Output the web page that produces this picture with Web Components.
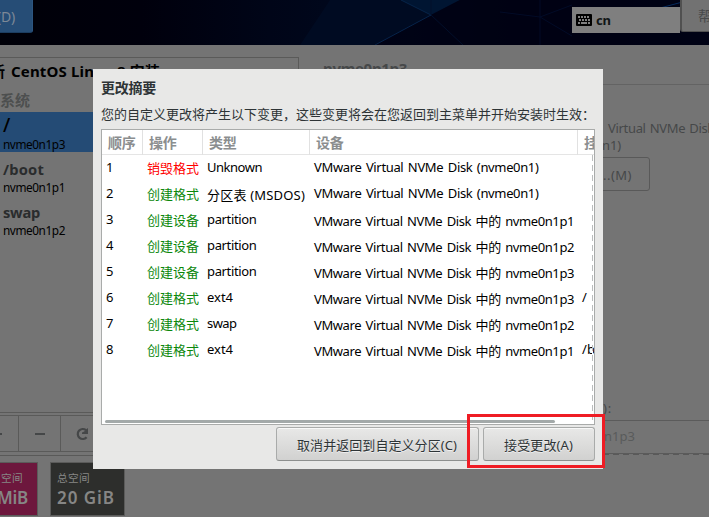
<!DOCTYPE html>
<html lang="zh-CN"><head><meta charset="utf-8"><title>更改摘要</title>
<style>html,body{margin:0;width:709px;height:517px;overflow:hidden;background:#747474;font-family:"Noto Sans","Noto Sans CJK SC",sans-serif}</style></head>
<body><installer-app></installer-app>
<script>
const define=(name,html,init)=>customElements.define(name,class extends HTMLElement{
  connectedCallback(){
    if(this.shadowRoot)return;
    const t=document.createElement('template');t.innerHTML=html;
    this.attachShadow({mode:'open'}).append(t.content.cloneNode(true));
    if(init)init.call(this,this.shadowRoot);
  }
});

// A single-line label; "w" is its advance width, spread over the letters.
define('ui-text',`<style>:host{display:block;white-space:pre;flex:none}span{display:inline-block}</style><span></span>`,function(r){
  const s=r.querySelector('span'),w=+this.getAttribute('w'),text=this.getAttribute('t');
  s.textContent=text;
  if(w){
    const now=s.getBoundingClientRect().width;
    s.style.letterSpacing=((w-now)/text.length)+'px';
  }
});

define('top-bar',`<style>
:host{display:flex;height:45px;position:relative;background:linear-gradient(90deg,#000008 0,#00000c 20%,#000518 38%,#000a20 58%,#000414 72%,#000316 85%,#000720 100%);overflow:hidden}
svg{position:absolute;inset:0}
.done{flex:none;width:33px;height:33px;box-sizing:border-box;background:#264d76;border-right:1px solid #2c5580;border-bottom:1px solid #1c3d60;border-radius:0 0 3px 0;color:#7d8896;font-size:14px;line-height:33px;overflow:hidden;position:relative}
.done ui-text{margin-left:-3px}
.kb{flex:none;position:relative;margin:7px 0 0 539px;width:108px;height:26px;background:#7f7f7f;display:flex;align-items:center;gap:4px;padding-left:4px;box-sizing:border-box;font:bold 13px/24px "Noto Sans";color:#111516}
.kb svg{position:static;flex:none}
.help{flex:none;position:relative;width:40px;height:31px;border:1px solid #515151;border-top:0;border-left:2px solid #505050;border-radius:0 0 0 3px;background:#727272;color:#484a4b;font-size:13.5px;line-height:33px;padding-left:16px}
</style>
<svg width="709" height="45"><path d="M401 0L431 15L460 0Z" fill="#001532"/><path d="M401 0L431 15L375 45H300L330 0Z" fill="#000b22"/><path d="M431 15L460 0H709V45H375Z" fill="#000113" opacity=".8"/><path d="M401 0L431 15L375 45" fill="none" stroke="#06244a"/><path d="M431 0V15L463 45" fill="none" stroke="#02102b"/><path d="M500 12L540 17M540 0V45M540 17L572 36M540 17L572 5" stroke="#020b27"/><path d="M660 8L690 0" stroke="#052b5d"/></svg>
<div class="done"><ui-text t="(D)" w="18"></ui-text></div>
<div class="kb"><svg width="16" height="12" viewBox="0 0 16 12"><rect width="16" height="12" rx="1" fill="#000"/><path d="M2 3H14M3 6H14" stroke="#7f7f7f" stroke-width="2" stroke-dasharray="2 1"/><path d="M2 9H4M5 9H11M12 9H14" stroke="#7f7f7f" stroke-width="2"/></svg><ui-text t="cn" w="15"></ui-text></div>
<div class="help"><ui-text t="帮"></ui-text></div>`);

define('mount-item',`<style>:host{display:block;height:43px;padding-left:3px;box-sizing:border-box;color:#2a2c2d;padding-top:6px}
:host([selected]){height:40px;background:#244b75;color:#000;padding-top:3px}
.n{font-weight:bold;font-size:14.7px;line-height:22px;height:22px}.d{font-size:11.8px;line-height:14px;color:#000}
:host([selected]) .n{font-size:19px;font-weight:500;line-height:20px}</style><div class="n"></div><div class="d"></div>`,function(r){
  r.querySelector('.n').innerHTML=`<ui-text t="${this.getAttribute('name')}" w="${this.getAttribute('nw')}"></ui-text>`;
  r.querySelector('.d').innerHTML=`<ui-text t="${this.getAttribute('dev')}" w="62"></ui-text>`;
});

define('side-panel',`<style>
:host{display:block;width:299px;flex:none;padding-top:12px;box-sizing:border-box;height:472px}
.list{height:354px;border:1px solid #5a5a59;border-left:0;box-sizing:content-box;overflow:hidden;width:298px}
.t{font:bold 15px/26px "Noto Sans","Noto Sans CJK SC",sans-serif;color:#000;height:30px;display:flex;gap:6px}
.t ui-text:first-child{margin-left:-10px}
.s{font:bold 15px/24px "Noto Sans CJK SC",sans-serif;color:#4d4f4f;height:24px}
mount-item[selected]{margin-top:0}
.bar{margin-top:2px;height:35px;border-top:1px solid #5a5a59;border-bottom:1px solid #5a5a59;display:flex;color:#454748}
.b{flex:none;box-sizing:border-box;display:grid;place-items:center;border-right:1px solid #5a5a59;width:42px;height:35px}.b:first-child{width:19px;place-items:center start}
.rule{height:3px;border-bottom:1px solid #595958}
.space{display:flex;margin-top:6px;gap:12px}
.box{height:54px;box-sizing:border-box;border:1px solid #5b5b5a;background:#2d2e2c;width:75px;color:#868685;padding:6px 0 0 6px;font-size:10.7px;line-height:18px;overflow:hidden}
.box:first-child{background:#6d173d;width:38px;border-left:0;padding-left:1px}
b{display:block;font-size:17px;line-height:22px;font-weight:600}
</style>
<div class="list"><div class="t"><ui-text t="新" w="15"></ui-text><ui-text t="CentOS Linux 8 安装" w="149"></ui-text></div>
<div class="s"><ui-text t="系统"></ui-text></div>
<mount-item selected name="/" dev="nvme0n1p3" nw="7"></mount-item><mount-item name="/boot" dev="nvme0n1p1" nw="41"></mount-item><mount-item name="swap" dev="nvme0n1p2" nw="37"></mount-item></div>
<div class="bar"><div class="b"><svg width="16" height="16"><path d="M0 8H2" stroke="currentColor" stroke-width="2"/></svg></div><div class="b"><svg width="16" height="16"><path d="M3 8H13" stroke="currentColor" stroke-width="2"/></svg></div><div class="b"><svg width="16" height="16"><path d="M12.6 11.2A5 5 0 1 1 12 4.2" fill="none" stroke="currentColor" stroke-width="2.2"/><path d="M14 2V8H8V6.5L10.2 5.5L12.6 3Z" fill="currentColor"/></svg></div></div>
<div class="rule"></div>
<div class="space"><div class="box"><ui-text t="空间" w="22"></ui-text><b><ui-text t="MiB" w="31" style="margin-left:-4px"></ui-text></b></div><div class="box"><ui-text t="总空间" w="33"></ui-text><b><ui-text t="20 GiB" w="58"></ui-text></b></div></div>`);

define('detail-panel',`<style>
:host{display:block;flex:1;padding-left:24px;color:#464849;height:472px;box-sizing:border-box;font-size:13px;overflow:hidden}
h2{font-size:15px;margin:12px 0 0;height:27px;line-height:22px;border-bottom:1px solid #636363}
.dev{padding:35px 0 0 285px;line-height:17px;height:34px}
.dev ui-text{height:17px;word-spacing:1px}
.dev ui-text+ui-text{margin-left:-6px}
.mod{width:327px;height:34px;box-sizing:border-box;border:1px solid #595959;border-radius:3px;margin-top:3px;line-height:34px;display:flex;justify-content:flex-end;padding-right:17px}
.lab{margin:208px 0 0 280px;line-height:19px;height:21px}
.entry{height:32px;border:1px solid #5b5b5b;border-right:0;line-height:31px;padding-left:280px;color:#595b5b}
.dash{height:1px;background:repeating-linear-gradient(90deg,#595959 0 6px,#747474 6px 10px)}
</style><h2><ui-text t="nvme0n1p3" w="84"></ui-text></h2>
<div class="dev"><ui-text t="Virtual NVMe Disk" w="106"></ui-text><ui-text t="n1)" w="19"></ui-text></div>
<div class="mod"><ui-text t="...(M)" w="33"></ui-text></div><div class="lab"><ui-text t="):" w="9"></ui-text></div>
<div class="entry"><ui-text t="n1p3" w="31"></ui-text></div><div class="dash"></div>`);

define('ui-button',`<style>:host{display:flex;justify-content:center;align-items:center;box-sizing:border-box;height:34px;border:1px solid #a9abaa;border-bottom-color:#8d8f8e;border-radius:3px;background:linear-gradient(#e8e8e7,#d1d1d0);box-shadow:inset 0 1px #f8f8f8;color:#2e3436;font-size:13px;line-height:20px;text-shadow:0 1px #eee;padding:1px 1px 0 0}</style><slot></slot>`);

define('change-table',`<style>
:host{display:block;position:relative;box-sizing:border-box;width:494px;height:296px;border:1px solid #a9abaa;background:#fff;overflow:hidden;font-size:13px;color:#000}
.row,.head{display:grid;grid-template-columns:41px 60px 107px 268px 60px;width:536px}
.head{height:24px;border-bottom:1px solid #e5e5e5;color:#8b8e8f;font:bold 14px/25px "Noto Sans CJK SC",sans-serif}
.head>div{padding-left:6px;border-right:1px solid #e1e1e1}
.rows{padding-top:1px}.row{height:26px;line-height:22px}
.row>div{padding-left:4px;white-space:nowrap;height:22px}.row>div.c{padding-top:2px}
.row>div:nth-child(2){color:#0b870b;padding-top:1px}.row:first-child>div:nth-child(2){color:#f00}
.row>div:nth-child(4){word-spacing:1.5px}
.edge{position:absolute;right:1px;top:25px;bottom:4px;width:1px;background:repeating-linear-gradient(#bbbdbd 0 6px,#fff 6px 10px)}
.bar{position:absolute;left:3px;bottom:1px;width:450px;height:3px;border-radius:2px;background:#a3a9a9}
</style><div class="head"></div><div class="rows"></div><div class="edge"></div><div class="bar"></div>`,function(r){
  r.querySelector('.head').innerHTML=['顺序','操作','类型','设备','挂载点'].map(t=>`<div><ui-text t="${t}"${t.length==2?' w="27.5"':''}></ui-text></div>`).join('');
  const disk='VMware Virtual NVMe Disk ';
  const cell=(t,w)=>`<div class="${/[\u4e00-\u9fff]/.test(t)?'c':''}"><ui-text t="${t}" w="${w}"></ui-text></div>`;
  r.querySelector('.rows').innerHTML=[
    ['销毁格式','Unknown',55,'(nvme0n1)',''],['创建格式','分区表 (MSDOS)',98,'(nvme0n1)',''],
    ['创建设备','partition',49.5,'中的 nvme0n1p1',''],['创建设备','partition',49.5,'中的 nvme0n1p2',''],
    ['创建设备','partition',49.5,'中的 nvme0n1p3',''],['创建格式','ext4',26,'中的 nvme0n1p3','/'],
    ['创建格式','swap',29.5,'中的 nvme0n1p2',''],['创建格式','ext4',26,'中的 nvme0n1p1','/boot']
  ].map((v,i)=>`<div class="row">${cell(i+1,7.5)}${cell(v[0],52)}${cell(v[1],v[2])}${cell(disk+v[3],v[3][0]=='('?224.5:260)}${cell(v[4],v[4]=='/boot'?34:0)}</div>`).join('');
});

define('change-dialog',`<style>
:host{display:block;box-sizing:border-box;width:510px;height:400px;background:#e8e8e7;padding:8px;color:#2e3436}
.h{font:bold 14px/21px "Noto Sans CJK SC",sans-serif;height:25px}
.p{font:13px/24px "Noto Sans CJK SC",sans-serif;height:27px}
.f{display:flex;justify-content:flex-end;gap:4px;padding-top:2px}
.f ui-button:first-child{width:203px}.f ui-button:last-child{width:112px}
</style><div class="h"><ui-text t="更改摘要" w="55"></ui-text></div><div class="p"><ui-text t="您的自定义更改将产生以下变更，这些变更将会在您返回到主菜单并开始安装时生效：" w="494"></ui-text></div>
<change-table></change-table>
<div class="f"><ui-button><ui-text t="取消并返回到自定义分区(C)" w="160"></ui-text></ui-button><ui-button><ui-text t="接受更改(A)" w="69"></ui-text></ui-button></div>`);

define('installer-app',`<style>:host{display:block;position:relative;width:709px;height:517px;overflow:hidden;background:#747474}
main{display:flex}change-dialog{position:absolute;left:93px;top:69px}
.mark{position:absolute;left:467px;top:414px;width:138px;height:54px;box-sizing:border-box;border:3px solid #ef1c24}</style>
<top-bar></top-bar><main><side-panel></side-panel><detail-panel></detail-panel></main><change-dialog></change-dialog><div class="mark"></div>`);
</script></body></html>
